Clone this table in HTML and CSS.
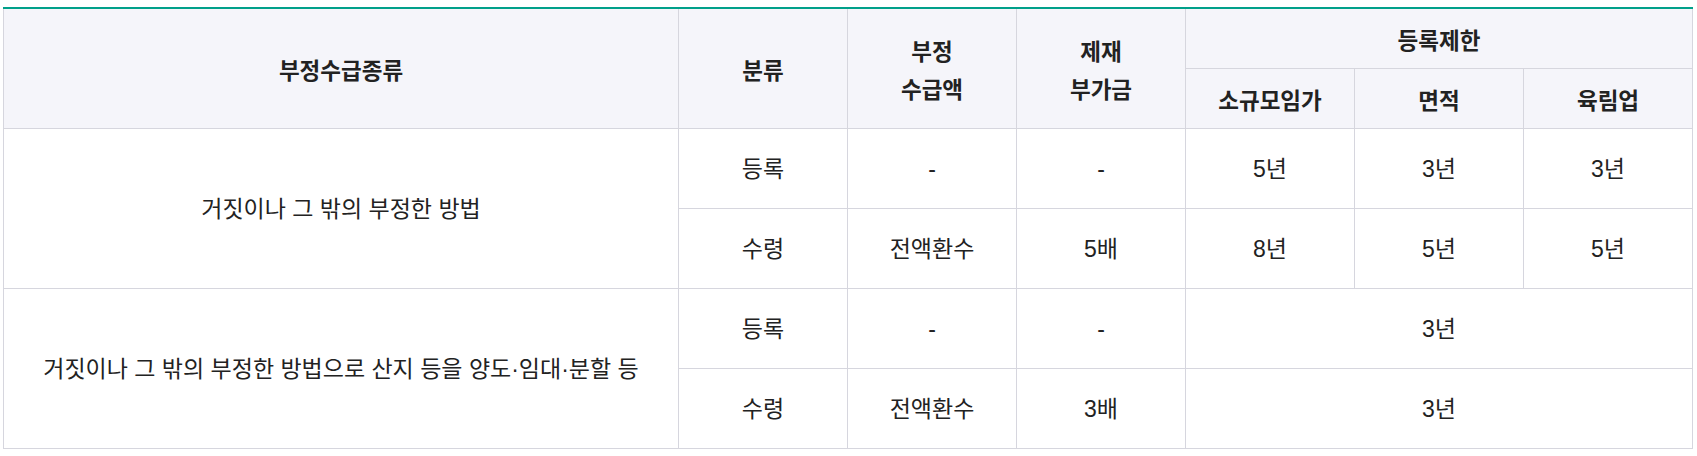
FILE: index.html
```html
<!DOCTYPE html>
<html lang="ko">
<head>
<meta charset="utf-8">
<link rel="stylesheet" href="styles.css">
</head>
<body>
<div class="wrap">
<table class="tbl">
  <colgroup>
    <col class="c-wide">
    <col class="c-n"><col class="c-n"><col class="c-n"><col class="c-n"><col class="c-n"><col class="c-n">
  </colgroup>
  <thead>
    <tr class="h1">
      <th rowspan="2">부정수급종류</th>
      <th rowspan="2">분류</th>
      <th rowspan="2">부정<br>수급액</th>
      <th rowspan="2">제재<br>부가금</th>
      <th colspan="3">등록제한</th>
    </tr>
    <tr class="h2">
      <th>소규모임가</th>
      <th>면적</th>
      <th>육림업</th>
    </tr>
  </thead>
  <tbody>
    <tr>
      <td rowspan="2">거짓이나 그 밖의 부정한 방법</td>
      <td>등록</td><td>-</td><td>-</td><td>5년</td><td>3년</td><td>3년</td>
    </tr>
    <tr>
      <td>수령</td><td>전액환수</td><td>5배</td><td>8년</td><td>5년</td><td>5년</td>
    </tr>
    <tr>
      <td rowspan="2">거짓이나 그 밖의 부정한 방법으로 산지 등을 양도·임대·분할 등</td>
      <td>등록</td><td>-</td><td>-</td><td colspan="3">3년</td>
    </tr>
    <tr>
      <td>수령</td><td>전액환수</td><td>3배</td><td colspan="3">3년</td>
    </tr>
  </tbody>
</table>
</div>
</body>
</html>
```

FILE: styles.css
```css
html, body {
  margin: 0;
  padding: 0;
  background: #ffffff;
}
.wrap {
  padding: 7px 0 0 3px;
}
.tbl {
  width: 1688px;
  border-collapse: collapse;
  table-layout: fixed;
  border-top: 2px solid #00a08a;
  font-family: "Liberation Sans", "Noto Sans CJK KR", sans-serif;
  color: #222222;
}
.c-wide { width: 675px; }
.c-n { width: 169px; }
.tbl th, .tbl td {
  border: 1px solid #d6d6de;
  text-align: center;
  vertical-align: middle;
  padding: 0;
}
.tbl th {
  background: #f5f5fa;
  font-family: "Noto Sans CJK KR", sans-serif;
  font-weight: 700;
  font-size: 22.5px;
  line-height: 38px;
  color: #222222;
}
.tbl tr.h1 th:last-child { height: 59px; }
.tbl tr.h2 th { height: 59px; }
.tbl tbody tr td { height: 79px; font-size: 23px; line-height: 30px; }
.tbl tbody td { font-family: "Liberation Sans", "Noto Sans CJK KR", sans-serif; }
```
